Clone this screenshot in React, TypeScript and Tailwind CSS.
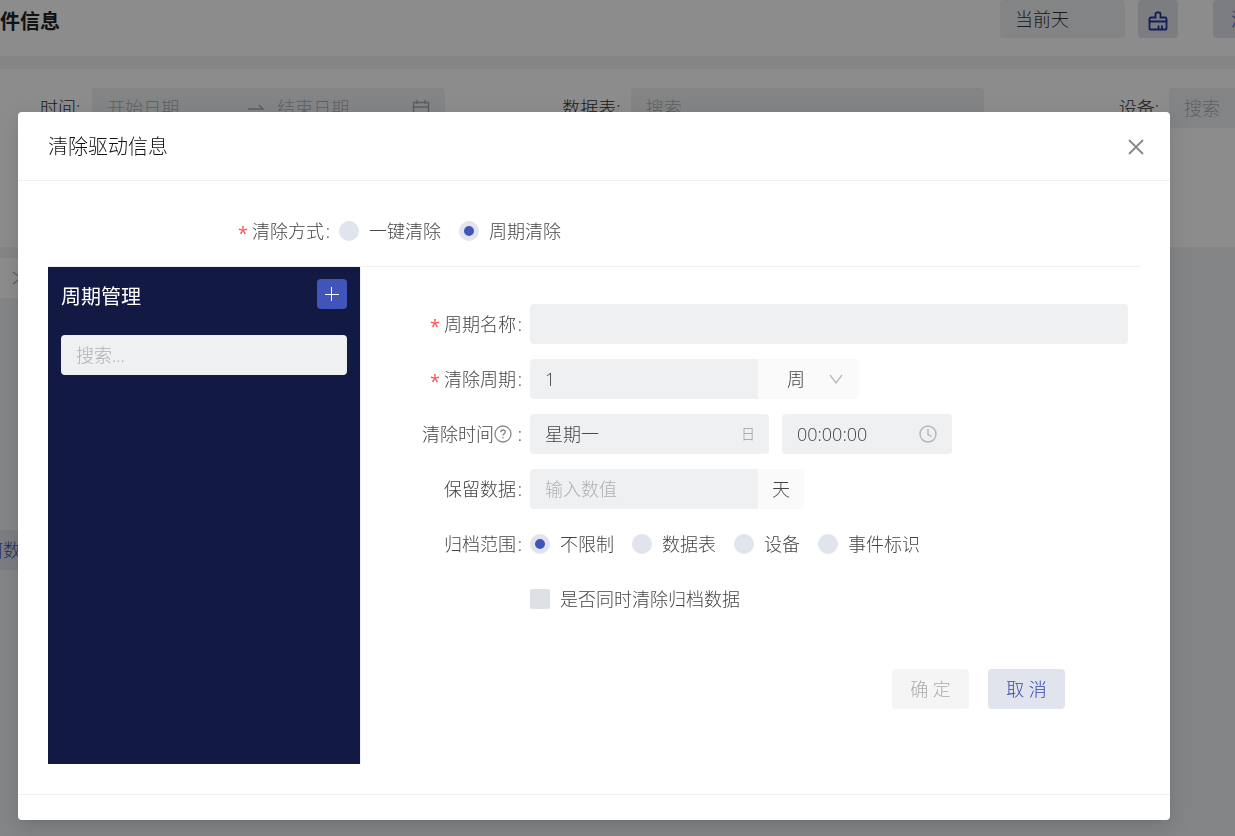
import React, { useState } from "react";

const rangeOptions = ["不限制", "数据表", "设备", "事件标识"];
const modeOptions = ["一键清除", "周期清除"];

const inputClass =
    "h-10 rounded bg-[#eff0f2] px-[15px] text-lg font-light text-[#444] placeholder:text-[#b0b0b0] outline-none";

interface RadioGroupProps {
    name: string;
    options: string[];
    value: string;
    onChange: (value: string) => void;
}

function RadioGroup({ name, options, value, onChange }: RadioGroupProps) {
    return (
        <div className="flex items-center gap-[18px]">
            {options.map((option) => (
                <label key={option} className="flex items-center gap-2.5 whitespace-nowrap">
                    <input
                        type="radio"
                        name={name}
                        checked={value === option}
                        onChange={() => onChange(option)}
                        className="h-5 w-5 appearance-none rounded-full border-[5px] border-[#e1e4ec] bg-[#e1e4ec] checked:bg-[#4054b9]"
                    />
                    {option}
                </label>
            ))}
        </div>
    );
}

interface FormRowProps {
    label?: string;
    htmlFor?: string;
    required?: boolean;
    help?: boolean;
    children: React.ReactNode;
}

function FormRow({ label, htmlFor, required, help, children }: FormRowProps) {
    return (
        <div className="flex h-10 items-center gap-2">
            <div className="flex w-[161px] shrink-0 items-center justify-end">
                {required && <RequiredMark />}
                {label && <label htmlFor={htmlFor}>{label}</label>}
                {help && <HelpIcon />}
                {label && <span className="w-[6px] text-right">:</span>}
            </div>
            {children}
        </div>
    );
}

function RequiredMark() {
    return <span className="mr-1 h-5 text-lg leading-6 font-normal text-[#ff4d4f]">*</span>;
}

function HelpIcon() {
    return (
        <svg width="18" height="18" viewBox="0 0 18 18" fill="none" stroke="#888" strokeWidth="1.3" className="mr-1">
            <circle cx="9" cy="9" r="8" />
            <path d="M6.7 7.2c0-1.3 1-2.2 2.3-2.2s2.3.9 2.3 2c0 1.7-2.3 1.600-2.3 3.600" />
            <path d="M9 12v1.4" />
        </svg>
    );
}

function CloseIcon() {
    return (
        <svg width="16" height="16" viewBox="0 0 16 16" fill="none" stroke="#888" strokeWidth="1.9">
            <path d="M1 1l14 14M15 1L1 15" />
        </svg>
    );
}

function ClearIcon() {
    return (
        <svg width="20" height="20" viewBox="0 0 20 20" fill="none" stroke="#2536a3" strokeWidth="1.8">
            <path d="M1.5 10.5V8q0-1.500 1.500-1.500h4.500V3q0-1.500 1.500-1.500h2q1.500 0 1.500 1.500v3.500H17q1.500 0 1.500 1.500v2.500" />
            <path d="M1.5 10.5h17v7q0 1-1 1h-15q-1 0-1-1zM10.500 18.500v-4M14 18.500v-4" />
        </svg>
    );
}

// Page below the dialog
function EventPage() {
    return (
        <div className="min-h-screen overflow-hidden bg-[#f0f2f5] text-lg font-light text-[#333]">
            <header className="flex h-14 items-start bg-white">
                <h1 className="pt-2 text-xl leading-7 font-bold text-[#222]">件信息</h1>
                <select aria-label="时间范围" className="ml-auto h-[38px] w-[125px] appearance-none rounded bg-[#eff0f2] px-[15px] outline-none">
                    <option>当前天</option>
                </select>
                <button aria-label="清除" className="ml-[13px] flex h-[38px] w-10 items-center justify-center rounded bg-[#e1e4ec] pt-1">
                    <ClearIcon />
                </button>
                <button className="ml-[35px] h-[38px] w-[22px] overflow-hidden rounded-l bg-[#e1e4ec] pl-[18px] text-left whitespace-nowrap text-[#4054b9]">
                    清除
                </button>
            </header>
            <section className="mt-[13px] flex h-[178px] items-start bg-white pt-[19px] pl-10 leading-10">
                <label htmlFor="start">时间:</label>
                <div className="ml-3 flex h-10 min-w-0 flex-1 items-center rounded bg-[#eff0f2] px-[15px]">
                    <input id="start" placeholder="开始日期" className="w-[140px] outline-none placeholder:text-[#b0b0b0]" />
                    <svg width="18" height="18" viewBox="0 0 18 18" fill="none" stroke="#aaa" strokeWidth="1.5">
                        <path d="M1 10h15l-4-4" />
                    </svg>
                    <input aria-label="结束日期" placeholder="结束日期" className="ml-3 w-0 flex-1 outline-none placeholder:text-[#b0b0b0]" />
                    <svg width="18" height="18" viewBox="0 0 18 18" fill="none" stroke="#aaa" strokeWidth="1.4">
                        <path d="M1.5 3.5h15v13h-15zM1.5 8h15M5 1v4M13 1v4" />
                    </svg>
                </div>
                <label htmlFor="table" className="ml-[117px]">数据表:</label>
                <input id="table" placeholder="搜索" className="ml-2.5 h-10 w-0 min-w-0 flex-1 rounded bg-[#eff0f2] px-[15px] outline-none placeholder:text-[#b0b0b0]" />
                <label htmlFor="device" className="ml-[135px]">设备:</label>
                <input id="device" placeholder="搜索" className="ml-2.5 h-10 w-[66px] rounded-l bg-[#eff0f2] pl-[15px] outline-none placeholder:text-[#b0b0b0]" />
            </section>
            <div className="mt-[11px] flex h-10 w-40 items-center bg-white pl-3">
                <svg width="10" height="14" viewBox="0 0 10 14" fill="none" stroke="#aaa" strokeWidth="1.3">
                    <path d="M1 1l8 6-8 6" />
                </svg>
            </div>
            <div className="mt-[232px] flex h-10 w-[39px] items-center justify-end bg-[#e1e4ec] text-[#4054b9]">
                <span className="whitespace-nowrap">何数据</span>
            </div>
        </div>
    );
}

export default function App() {
    const [mode, setMode] = useState("周期清除");
    const [range, setRange] = useState("不限制");

    return (
        <div className="font-['Open_Sans','Noto_Sans_CJK_SC',sans-serif]">
            <EventPage />
            <div className="fixed inset-0 overflow-hidden bg-black/45 pt-28 pr-[65px] pl-[18px]">
                <div
                    role="dialog"
                    aria-labelledby="dialog-title"
                    className="rounded bg-white text-lg leading-7 font-light text-[#444] shadow-[0_3px_6px_-4px_rgba(0,0,0,0.12),0_6px_16px_0_rgba(0,0,0,0.08),0_9px_28px_8px_rgba(0,0,0,0.05)]"
                >
                    <div className="flex h-[69px] items-center justify-between border-b border-[#f0f0f0] pt-0.5 pr-[26px] pl-[30px]">
                        <h2 id="dialog-title" className="text-xl text-[#111]">清除驱动信息</h2>
                        <button aria-label="关闭"><CloseIcon /></button>
                    </div>

                    <div className="p-[30px]">
                        <div className="flex h-10 items-center">
                            <div className="flex w-[282px] items-center justify-end">
                                <RequiredMark />
                                <span>清除方式</span>
                                <span className="w-[6px] text-right">:</span>
                            </div>
                            <div className="ml-[9px]">
                                <RadioGroup name="mode" options={modeOptions} value={mode} onChange={setMode} />
                            </div>
                        </div>

                        <div className="mt-[15px] flex border-t border-[#f0f0f0]">
                            {/* Sidebar */}
                            <aside className="h-[497px] w-[313px] shrink-0 border-r border-[#f0f0f0] bg-[#121a44] px-[13px] pt-3">
                                <div className="flex items-start justify-between">
                                    <h3 className="pt-0.5 text-xl leading-8 font-normal text-white">周期管理</h3>
                                    <button aria-label="新增" className="flex h-[30px] w-[30px] items-center justify-center rounded bg-[#4054b9]">
                                        <svg width="14" height="14" viewBox="0 0 14 14" stroke="#fff">
                                            <path d="M6.5 0v14M0 7.5h14" />
                                        </svg>
                                    </button>
                                </div>
                                <input aria-label="搜索" placeholder="搜索..." className={`${inputClass} mt-[22px] w-full`} />
                            </aside>

                            {/* Form */}
                            <form className="flex flex-1 flex-col gap-[15px] pt-[37px] pr-3">
                                <FormRow label="周期名称" htmlFor="name" required>
                                    <input id="name" className={`${inputClass} min-w-0 flex-1`} />
                                </FormRow>
                                <FormRow label="清除周期" htmlFor="period" required>
                                    <div className="flex">
                                        <input id="period" defaultValue="1" className={`${inputClass} w-[228px] rounded-r-none`} />
                                        <div className="relative">
                                            <select aria-label="周期单位" className="h-10 w-[101px] appearance-none rounded-r bg-[#fafafa] pl-[29px] outline-none">
                                                <option>周</option>
                                            </select>
                                            <svg width="14" height="10" viewBox="0 0 14 10" fill="none" stroke="#bbb" strokeWidth="1.3" className="pointer-events-none absolute top-[15px] right-4">
                                                <path d="M1 1l6 8 6-8" />
                                            </svg>
                                        </div>
                                    </div>
                                </FormRow>
                                <FormRow label="清除时间" htmlFor="day" help>
                                    <div className="flex gap-[13px]">
                                        <div className="relative">
                                            <select id="day" className={`${inputClass} w-[239px] appearance-none`}>
                                                <option>星期一</option>
                                            </select>
                                            <span className="pointer-events-none absolute top-1.5 right-3.5 text-sm leading-7 text-[#999]">日</span>
                                        </div>
                                        <div className="relative">
                                            <input aria-label="时间" defaultValue="00:00:00" className={`${inputClass} w-[170px]`} />
                                            <svg width="18" height="18" viewBox="0 0 18 18" fill="none" stroke="#b5b5b5" strokeWidth="1.4" className="pointer-events-none absolute top-[11px] right-[15px]">
                                                <circle cx="9" cy="9" r="8" />
                                                <path d="M9 4v5.5l3.5 2" />
                                            </svg>
                                        </div>
                                    </div>
                                </FormRow>
                                <FormRow label="保留数据" htmlFor="keep">
                                    <div className="flex">
                                        <input id="keep" placeholder="输入数值" className={`${inputClass} w-[228px] rounded-r-none`} />
                                        <span className="flex h-10 w-[46px] items-center justify-center rounded-r bg-[#fafafa]">天</span>
                                    </div>
                                </FormRow>
                                <FormRow label="归档范围">
                                    <RadioGroup name="range" options={rangeOptions} value={range} onChange={setRange} />
                                </FormRow>
                                <FormRow>
                                    <label className="flex items-center gap-2.5">
                                        <input type="checkbox" className="h-5 w-5 appearance-none rounded-xs bg-[#dde1e5] checked:bg-[#4054b9]" />
                                        是否同时清除归档数据
                                    </label>
                                </FormRow>
                                <div className="mt-5 flex justify-end gap-[19px] pt-[15px] pr-[63px]">
                                    <button type="button" disabled className="h-10 w-[77px] rounded bg-[#f5f5f5] text-[#aaa]">确 定</button>
                                    <button type="button" className="h-10 w-[77px] rounded bg-[#e1e4ec] text-[#3347b0]">取 消</button>
                                </div>
                            </form>
                        </div>
                    </div>

                    <div className="h-[26px] border-t border-[#f0f0f0]"></div>
                </div>
            </div>
        </div>
    );
}
